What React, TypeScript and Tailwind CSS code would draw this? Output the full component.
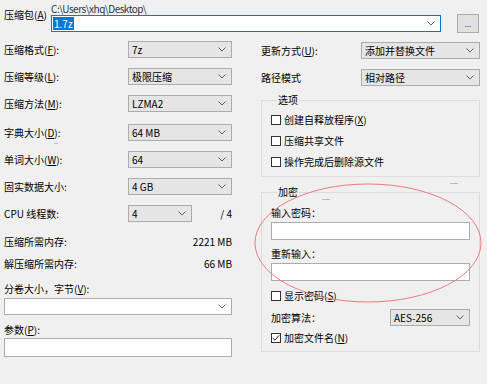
import React from "react";

const FONT = { fontFamily: '"Noto Sans CJK SC", "Noto Sans", sans-serif' };

function Chevron() {
  return (
    <svg width="8" height="5" viewBox="0 0 8 5" className="shrink-0">
      <path d="M0.5 0.5 L4 4 L7.5 0.5" fill="none" stroke="#606060" strokeWidth="1" />
    </svg>
  );
}

function Select({ value, w, h = 17, white = false }: { value: string; w: string; h?: number; white?: boolean }) {
  return (
    <div
      className={`${w} flex items-center justify-between pl-[3px] pr-[5px] border shrink-0 ${
        white ? "bg-white border-[#acacac]" : "bg-[#e5e5e5] border-[#acacac]"
      }`}
      style={{ height: h }}
    >
      <span className="leading-[12px]">{value}</span>
      <Chevron />
    </div>
  );
}

function U({ c }: { c: string }) {
  return (
    <>
      (<span className="underline">{c}</span>)
    </>
  );
}

function LeftRow({ label, value, mt }: { label: React.ReactNode; value: string; mt: string }) {
  return (
    <div className={`flex items-center h-[17px] ${mt}`}>
      <div className="w-[124px] leading-[14px]">{label}</div>
      <Select value={value} w="w-[104px]" />
    </div>
  );
}

function Check({ label, checked = false, mt }: { label: React.ReactNode; checked?: boolean; mt: string }) {
  return (
    <div className={`flex items-center h-[14px] ${mt}`}>
      <div className="w-[10px] h-[10px] border border-[#333333] bg-white flex items-center justify-center mr-[3px]">
        {checked && (
          <svg width="8" height="8" viewBox="0 0 8 8">
            <path d="M0.8 4 L3 6.2 L7.2 1.2" fill="none" stroke="#222" strokeWidth="1" />
          </svg>
        )}
      </div>
      <span className="leading-[14px]">{label}</span>
    </div>
  );
}

export default function App() {
  return (
    <div className="w-[487px] h-[384px] bg-[#f0f0f0] relative overflow-hidden text-[10px] text-black" style={FONT}>
      {/* header */}
      <div className="flex pl-[4px] pt-[2px] h-[32px]">
        <div className="w-[47px] pt-[6px] leading-[14px]">
          压缩包<U c="A" />
        </div>
        <div className="w-[390px] flex flex-col">
          <div className="h-[13px] leading-[13px] text-[#333] tracking-[-0.5px]">C:\Users\xhq\Desktop\</div>
          <div className="h-[17px] bg-white border border-[#0078d7] flex items-center justify-between pl-[1px] pr-[5px]">
            <span className="bg-[#0078d7] text-white leading-[13px] px-[1px]">1.7z</span>
            <Chevron />
          </div>
        </div>
        <div className="ml-[16px] mt-[12px] w-[22px] h-[19px] bg-[#e1e1e1] border border-[#adadad] flex items-center justify-center text-[8px] leading-[8px] text-[#333]">
          ...
        </div>
      </div>

      {/* body */}
      <div className="flex pl-[4px]">
        {/* left column */}
        <div className="w-[228px] flex flex-col">
          <LeftRow mt="mt-[9px]" label={<>压缩格式<U c="F" />:</>} value="7z" />
          <LeftRow mt="mt-[10px]" label={<>压缩等级<U c="L" />:</>} value="极限压缩" />
          <LeftRow mt="mt-[10px]" label={<>压缩方法<U c="M" />:</>} value="LZMA2" />
          <LeftRow mt="mt-[12px]" label={<>字典大小<U c="D" />:</>} value="64 MB" />
          <LeftRow mt="mt-[10px]" label={<>单词大小<U c="W" />:</>} value="64" />
          <LeftRow mt="mt-[10px]" label="固实数据大小:" value="4 GB" />
          <div className="flex items-center h-[17px] mt-[10px]">
            <div className="w-[124px] leading-[14px]">CPU 线程数:</div>
            <Select value="4" w="w-[64px]" />
            <div className="flex-1 text-right leading-[14px]">/ 4</div>
          </div>
          <div className="flex justify-between leading-[14px] mt-[13px]">
            <span>压缩所需内存:</span>
            <span>2221 MB</span>
          </div>
          <div className="flex justify-between leading-[14px] mt-[8px]">
            <span>解压缩所需内存:</span>
            <span>66 MB</span>
          </div>
          <div className="leading-[14px] mt-[11px]">
            分卷大小，字节<U c="V" />:
          </div>
          <div className="mt-[2px]">
            <Select value="" w="w-[228px]" white />
          </div>
          <div className="leading-[14px] mt-[8px]">
            参数<U c="P" />:
          </div>
          <div className="mt-[1px] h-[19px] w-[228px] bg-white border border-[#acacac]" />
        </div>

        {/* right column */}
        <div className="w-[219px] ml-[29px] flex flex-col">
          <div className="flex items-center h-[17px] mt-[10px]">
            <div className="w-[100px] leading-[14px]">
              更新方式<U c="U" />:
            </div>
            <Select value="添加并替换文件" w="w-[119px]" />
          </div>
          <div className="flex items-center h-[17px] mt-[10px]">
            <div className="w-[100px] leading-[14px]">路径模式</div>
            <Select value="相对路径" w="w-[119px]" />
          </div>

          <fieldset className="mt-[7px] border border-[#dcdcdc] px-[9px] pb-[7px]">
            <legend className="ml-[6px] px-[1px] leading-[14px]">选项</legend>
            <Check mt="mt-[6px]" label={<>创建自释放程序<U c="X" /></>} />
            <Check mt="mt-[7px]" label="压缩共享文件" />
            <Check mt="mt-[7px]" label="操作完成后删除源文件" />
          </fieldset>

          <fieldset className="mt-[8px] border border-[#dcdcdc] px-[9px] pb-[6px]">
            <legend className="ml-[6px] px-[1px] leading-[14px]">加密</legend>
            <div className="leading-[14px] mt-[7px]">输入密码：</div>
            <div className="mt-[2px] h-[18px] bg-white border border-[#acacac]" />
            <div className="leading-[14px] mt-[7px]">重新输入：</div>
            <div className="mt-[2px] h-[18px] bg-white border border-[#acacac]" />
            <Check mt="mt-[8px]" label={<>显示密码<U c="S" /></>} />
            <div className="flex items-center justify-between h-[17px] mt-[6px]">
              <span className="leading-[14px]">加密算法：</span>
              <Select value="AES-256" w="w-[80px]" />
            </div>
            <Check mt="mt-[5px]" checked label={<>加密文件名<U c="N" /></>} />
          </fieldset>
        </div>
      </div>

      {/* annotation overlay */}
      <svg className="absolute left-0 top-0 pointer-events-none" width="487" height="384">
        <ellipse cx="368" cy="243" rx="113" ry="59" fill="none" stroke="#ec7b7b" strokeWidth="1" />
      </svg>
      <div className="absolute left-[54px] top-[143px] w-[4px] h-[1px] bg-[#e6a0e6]" />
      <div className="absolute left-[450px] top-[183px] w-[8px] h-[1px] bg-[#e6a0e6]" />
      <div className="absolute left-[322px] top-[199px] w-[8px] h-[1px] bg-[#e6a0e6]" />
    </div>
  );
}
